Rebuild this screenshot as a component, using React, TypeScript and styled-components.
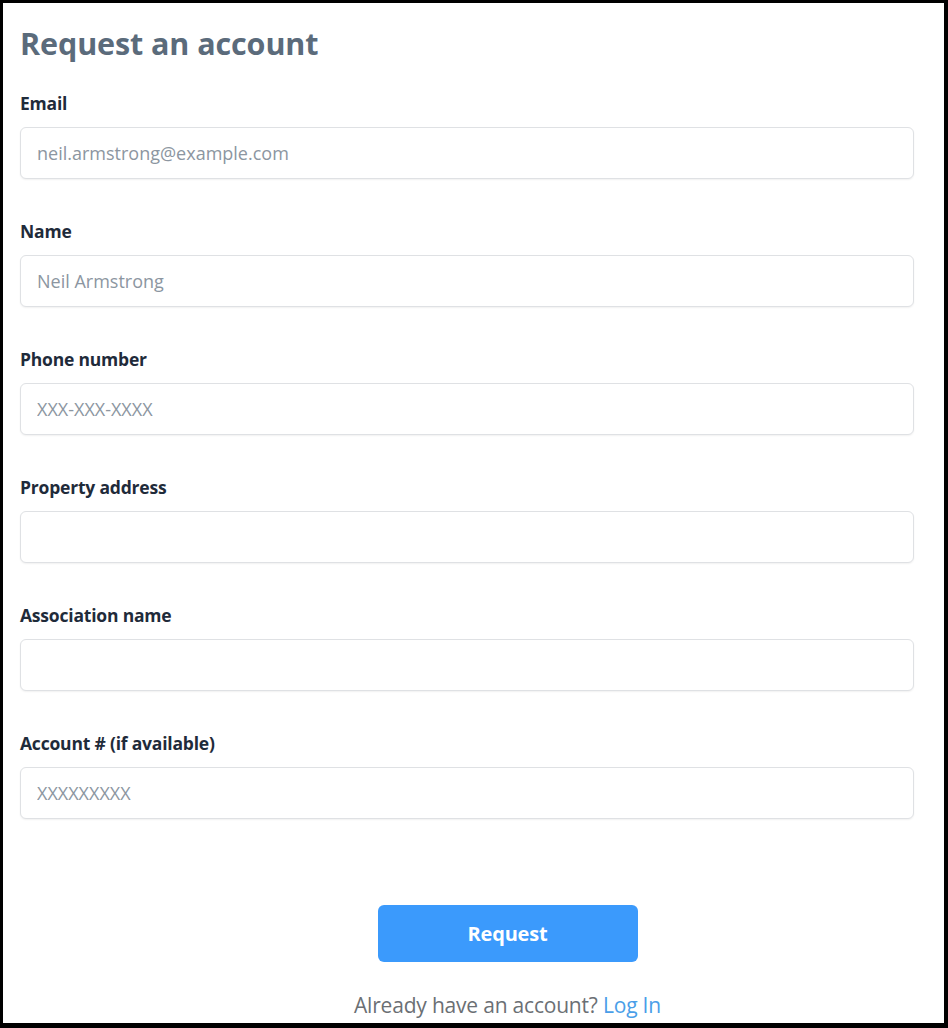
import React from 'react';
import styled, { createGlobalStyle } from 'styled-components';

const GlobalStyle = createGlobalStyle`
  html, body {
    margin: 0;
    padding: 0;
    background: #000;
  }
  body {
    font-family: "Open Sans", "Noto Sans", "Liberation Sans", sans-serif;
  }
`;

const Frame = styled.div`
  box-sizing: border-box;
  width: 948px;
  height: 1028px;
  border-style: solid;
  border-color: #000;
  border-width: 3px 4px 5px 3px;
  background: #fff;
  overflow: hidden;
`;

const Form = styled.form`
  display: flex;
  flex-direction: column;
  padding: 21px 30px 0 17px;
`;

const Title = styled.h1`
  margin: 0 0 30px;
  font-size: 30.5px;
  line-height: 38px;
  font-weight: 700;
  color: #5b6b7b;
  letter-spacing: -0.1px;
`;

const Field = styled.div`
  display: flex;
  flex-direction: column;
  gap: 13px;
  margin-bottom: 41px;
`;

const Label = styled.label`
  font-size: 17.5px;
  line-height: 22px;
  font-weight: 700;
  color: #1f2b3a;
  letter-spacing: -0.2px;
`;

const Input = styled.input`
  box-sizing: border-box;
  height: 52px;
  width: 100%;
  padding: 0 16px;
  border: 1px solid #dfe1e4;
  border-radius: 6px;
  box-shadow: 0 1px 2px rgba(0, 0, 0, 0.06);
  font-family: inherit;
  font-size: 18px;
  color: #333;
  outline: none;
  &::placeholder {
    color: #8c96a1;
  }
`;

const Footer = styled.div`
  display: flex;
  flex-direction: column;
  align-items: center;
  padding-left: 81px;
  margin-top: 45px;
  gap: 29px;
`;

const Button = styled.button`
  width: 260px;
  height: 57px;
  border: none;
  border-radius: 6px;
  background: #3b9afc;
  color: #fff;
  font-family: inherit;
  font-size: 20px;
  font-weight: 700;
  letter-spacing: -0.2px;
  cursor: pointer;
`;

const Note = styled.p`
  margin: 0;
  font-size: 21px;
  line-height: 28px;
  color: #6b6f74;
  letter-spacing: -0.2px;
`;

const Link = styled.a`
  color: #4a9ee8;
  text-decoration: none;
`;

const fields = [
  { id: 'email', label: 'Email', placeholder: 'neil.armstrong@example.com' },
  { id: 'name', label: 'Name', placeholder: 'Neil Armstrong' },
  { id: 'phone', label: 'Phone number', placeholder: 'XXX-XXX-XXXX' },
  { id: 'address', label: 'Property address', placeholder: '' },
  { id: 'association', label: 'Association name', placeholder: '' },
  { id: 'account', label: 'Account # (if available)', placeholder: 'XXXXXXXXX' },
];

export default function App() {
  return (
    <>
      <GlobalStyle />
      <Frame>
        <Form onSubmit={e => e.preventDefault()}>
          <Title>Request an account</Title>
          {fields.map(f => (
            <Field key={f.id}>
              <Label htmlFor={f.id}>{f.label}</Label>
              <Input id={f.id} placeholder={f.placeholder} />
            </Field>
          ))}
          <Footer>
            <Button type="submit">Request</Button>
            <Note>
              Already have an account? <Link href="#">Log In</Link>
            </Note>
          </Footer>
        </Form>
      </Frame>
    </>
  );
}
